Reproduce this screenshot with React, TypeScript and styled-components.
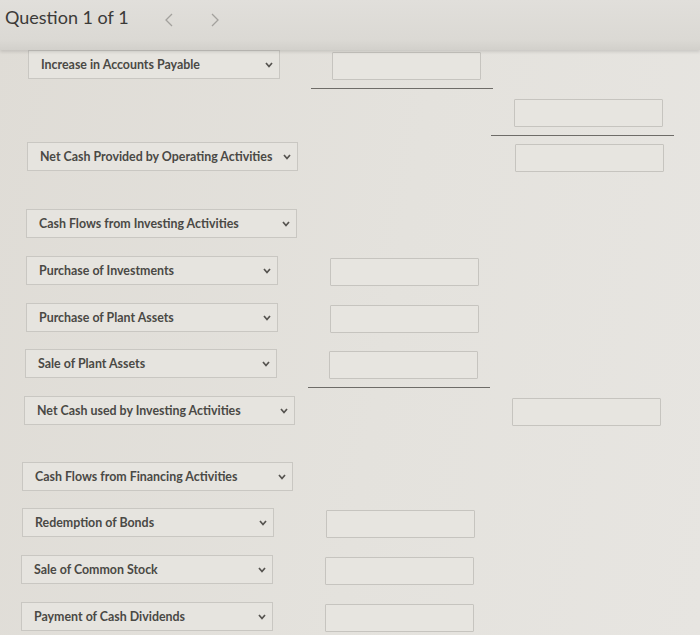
import React from "react";
import styled, { createGlobalStyle } from "styled-components";

const GlobalStyle = createGlobalStyle`
  html, body {
    margin: 0;
    padding: 0;
    background: #e3e0da;
  }
  * {
    box-sizing: border-box;
  }
`;

const Page = styled.div`
  width: 700px;
  height: 635px;
  overflow: hidden;
  background: linear-gradient(100deg, #dfdcd6 0%, #e4e2dd 55%, #e7e5e1 100%);
  font-family: Lato, "Noto Sans", sans-serif;
`;

const Header = styled.div`
  position: relative;
  z-index: 2;
  height: 50px;
  display: flex;
  align-items: flex-start;
  padding: 6px 0 0 5px;
  background: linear-gradient(180deg, #e1dfdb 0%, #dbd9d4 80%, #d2d0cb 100%);
  box-shadow: 0 2px 3px rgba(0, 0, 0, 0.12);
`;

const Title = styled.span`
  font-size: 18px;
  font-weight: 400;
  color: #3b3a38;
`;

const Pager = styled.div`
  display: flex;
  gap: 36px;
  margin: 7px 0 0 35px;
`;

const Arrow = styled.svg`
  width: 10px;
  height: 14px;
  fill: none;
  stroke: #a3a19d;
  stroke-width: 1.3;
`;

const Row = styled.div<{ $x: number; $gap: number }>`
  display: grid;
  grid-template-columns: 283px 182px 183px;
  grid-template-rows: 29px;
  height: 29px;
  margin-top: ${(p) => p.$gap}px;
  padding-left: ${(p) => p.$x}px;
`;

const Select = styled.div<{ $w: number }>`
  grid-column: 1;
  width: ${(p) => p.$w}px;
  height: 29px;
  display: flex;
  align-items: center;
  justify-content: space-between;
  padding: 0 6px 0 12px;
  border: 1px solid #c9c7c2;
  background: #e6e4df;
  font-size: 12.4px;
  font-weight: 700;
  color: #4a4945;
  white-space: nowrap;
`;

const Chevron = styled.svg`
  width: 8px;
  height: 6px;
  fill: none;
  stroke: #55534f;
  stroke-width: 1.7;
`;

const Cell = styled.div<{ $col: number; $rule?: boolean }>`
  grid-column: ${(p) => p.$col};
  align-self: start;
  padding: 2px ${(p) => (p.$col === 2 ? 12 : 11)}px ${(p) => (p.$rule ? 8 : 0)}px
    ${(p) => (p.$col === 2 ? 21 : 23)}px;
  border-bottom: ${(p) => (p.$rule ? "1.5px solid #6e6c68" : "none")};
`;

const Box = styled.div`
  height: 28px;
  border: 1px solid #c6c4bf;
  border-radius: 1px;
  background: #e7e5e0;
`;

type Line = {
  x: number;
  gap: number;
  label?: string;
  long?: boolean;
  amount?: boolean;
  total?: boolean;
  rule?: boolean;
};

const lines: Line[] = [
  { x: 28, gap: 0, label: "Increase in Accounts Payable", amount: true, rule: true },
  { x: 26, gap: 18, total: true, rule: true },
  { x: 27, gap: 16, label: "Net Cash Provided by Operating Activities", long: true, total: true },
  { x: 26, gap: 38, label: "Cash Flows from Investing Activities", long: true },
  { x: 26, gap: 18, label: "Purchase of Investments", amount: true },
  { x: 26, gap: 18, label: "Purchase of Plant Assets", amount: true },
  { x: 25, gap: 17, label: "Sale of Plant Assets", amount: true, rule: true },
  { x: 24, gap: 18, label: "Net Cash used by Investing Activities", long: true, total: true },
  { x: 22, gap: 37, label: "Cash Flows from Financing Activities", long: true },
  { x: 22, gap: 17, label: "Redemption of Bonds", amount: true },
  { x: 21, gap: 18, label: "Sale of Common Stock", amount: true },
  { x: 21, gap: 18, label: "Payment of Cash Dividends", amount: true },
];

export default function App() {
  return (
    <>
      <GlobalStyle />
      <Page>
        <Header>
          <Title>Question 1 of 1</Title>
          <Pager>
            <Arrow viewBox="0 0 10 14">
              <polyline points="8,1 2,7 8,13" />
            </Arrow>
            <Arrow viewBox="0 0 10 14">
              <polyline points="2,1 8,7 2,13" />
            </Arrow>
          </Pager>
        </Header>
        {lines.map((l, i) => (
          <Row key={i} $x={l.x} $gap={l.gap}>
            {l.label && (
              <Select $w={l.long ? 271 : 252}>
                <span>{l.label}</span>
                <Chevron viewBox="0 0 8 6">
                  <polyline points="1,1 4,4.5 7,1" />
                </Chevron>
              </Select>
            )}
            {l.amount && (
              <Cell $col={2} $rule={l.rule}>
                <Box />
              </Cell>
            )}
            {l.total && (
              <Cell $col={3} $rule={l.rule}>
                <Box />
              </Cell>
            )}
          </Row>
        ))}
      </Page>
    </>
  );
}
